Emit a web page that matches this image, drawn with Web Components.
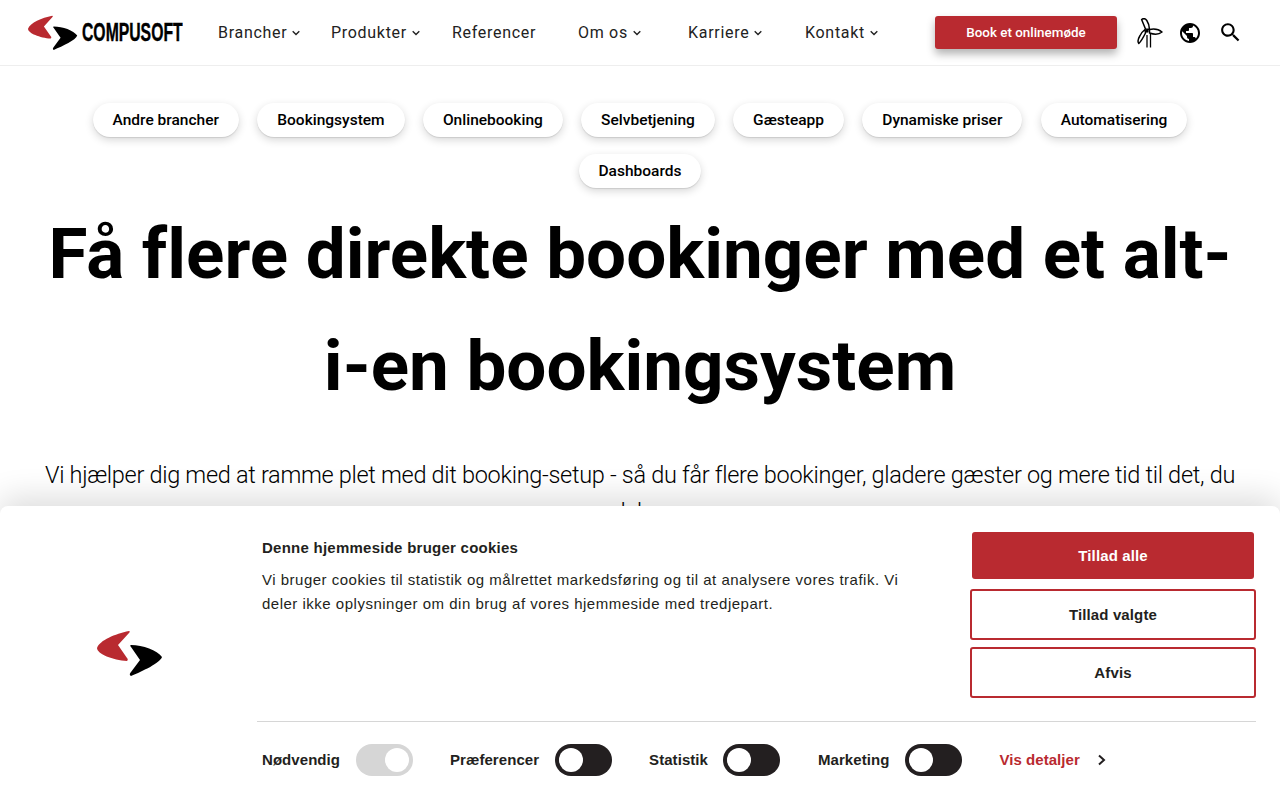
<!DOCTYPE html>
<html lang="da"><head><meta charset="utf-8"><title>Compusoft</title>
<style>
html,body{margin:0;height:800px;overflow:hidden;background:#fff}
body{font-family:Roboto,sans-serif;color:#000;position:relative}
</style></head><body>
<cs-header></cs-header>
<cs-hero></cs-hero>
<cs-cookie></cs-cookie>
<script>
const MARK=(w,h)=>`<svg style="flex:none;display:block" width="${w}" height="${h}" viewBox="0 0 66 46" aria-hidden="true"><path d="M32 1C18 4 3 10 0 18C0 24 16 30 30 31C31 30 31 29 30 28L21 15L32 3C33 2 33 1 32 1Z" fill="#b92a30"/><path d="M34 15C46 15 60 20 65 27C63 33 46 41 34 46C32 45 33 43 34 42L43 30L34 17C33 16 33 15 34 15Z" fill="#000"/></svg>`;
const CHEV=`<svg width="8" height="6" viewBox="0 0 8 6"><path d="M.7 1.200L4 4.500L7.300 1.200" fill="none" stroke="#222" stroke-width="1.400"/></svg>`;
class CsHeader extends HTMLElement{constructor(){super();this.attachShadow({mode:'open'}).innerHTML=`<style>
:host{display:flex;align-items:center;height:65px;border-bottom:1px solid #eee;padding:0 28px;box-sizing:content-box;font-family:Roboto,sans-serif}
.logo{display:flex;align-items:center;width:155px;flex:none}
.logo span{flex:none;width:101px;margin-left:4px;font:bold 25px "Liberation Sans",sans-serif;white-space:nowrap;display:inline-block;transform:scaleX(.63);transform-origin:left;-webkit-text-stroke:.4px #000}
nav{display:flex;margin-left:35px;flex:none}
a{display:flex;align-items:center;font-size:16px;letter-spacing:.7px;color:#222;white-space:nowrap}
a svg{margin-left:5px}
.btn{flex:none;width:182px;height:33px;background:#b92a30;color:#fff;border-radius:3px;display:flex;align-items:center;justify-content:center;font-size:13.400px;font-weight:500;box-shadow:0 5px 9px rgba(0,0,0,.3)}
.i{flex:none;display:block}
</style>
<div class="logo">${MARK(50,35)}<span>COMPUSOFT</span></div>
<nav>
<a style="width:113px">Brancher${CHEV}</a>
<a style="width:121px">Produkter${CHEV}</a>
<a style="width:126px">Referencer</a>
<a style="width:110px">Om os${CHEV}</a>
<a style="width:117px">Karriere${CHEV}</a>
<a style="width:130px">Kontakt${CHEV}</a>
</nav>
<div class="btn">Book et onlinemøde</div>
<svg class="i" style="margin-left:20px;margin-top:0" width="26" height="30" viewBox="0 0 26 30"><path d="M10 17V29.500M13.500 16V29.500" fill="none" stroke="#000" stroke-width="1.300"/><g fill="#fff" stroke="#000" stroke-width="1.500" stroke-linejoin="round"><path d="M8.500 11L4.600 1.500C6.500 .2 8.500 .6 9.800 2.500C11.800 5.500 12.500 8.500 12.500 11.500Z"/><path d="M12.500 11.500C17 10.500 22 11.500 25 14C22 16.500 17 16.500 12.500 15Z"/><path d="M8.500 15C6.500 19 4 23.500 1.800 25.500C.6 24 1 21 2.800 18C4 15.500 6 13 8 11.500Z"/></g><circle cx="10" cy="13" r="1.700" fill="#000"/></svg>
<svg class="i" style="margin-left:15px;margin-top:1px" width="24" height="24" viewBox="0 0 24 24"><path d="M12 2C6.480 2 2 6.480 2 12s4.480 10 10 10 10-4.480 10-10S17.520 2 12 2zm-1 17.930c-3.950-.490-7-3.850-7-7.930 0-.620.080-1.210.210-1.790L9 15v1c0 1.100.9 2 2 2v1.930zm6.900-2.540c-.260-.810-1-1.390-1.900-1.390h-1v-3c0-.550-.450-1-1-1H8v-2h2c.550 0 1-.450 1-1V7h2c1.100 0 2-.9 2-2v-.410c2.930 1.190 5 4.060 5 7.410 0 2.080-.8 3.970-2.100 5.390z"/></svg>
<svg class="i" style="margin-left:16px" width="25" height="25" viewBox="0 0 24 24"><path d="M15.500 14h-.790l-.280-.270C15.410 12.590 16 11.110 16 9.500 16 5.910 13.090 3 9.500 3S3 5.910 3 9.500 5.910 16 9.500 16c1.610 0 3.090-.590 4.230-1.570l.270.280v.790l5 4.990L20.490 19l-4.990-5zm-6 0C7.010 14 5 11.990 5 9.500S7.010 5 9.500 5 14 7.010 14 9.500 11.990 14 9.500 14z"/></svg>`}}
class CsChip extends HTMLElement{constructor(){super();this.attachShadow({mode:'open'}).innerHTML=`<style>
:host{display:inline-flex;align-items:center;height:34px;padding:0 20px;border-radius:17px;background:#fff;font:500 15.500px Roboto,sans-serif;color:#000;box-shadow:0 1px 1px rgba(0,0,0,.1),0 3px 8px rgba(0,0,0,.16);white-space:nowrap}
</style><slot></slot>`}}
class CsHero extends HTMLElement{constructor(){super();this.attachShadow({mode:'open'}).innerHTML=`<style>
:host{display:block;text-align:center;padding:37px 32px 0;font-family:Roboto,sans-serif}
.chips{display:flex;flex-wrap:wrap;justify-content:center;gap:17px 18.300px}
h1{margin:10px 0 0;font:700 71px/112px Roboto,sans-serif;font-variant-ligatures:none;color:#000}
p{margin:35px -10px 0;font:300 23.500px/37px Roboto,sans-serif;letter-spacing:-.3px;color:#000}
</style>
<div class="chips"><cs-chip>Andre brancher</cs-chip><cs-chip>Bookingsystem</cs-chip><cs-chip>Onlinebooking</cs-chip><cs-chip>Selvbetjening</cs-chip><cs-chip>Gæsteapp</cs-chip><cs-chip>Dynamiske priser</cs-chip><cs-chip>Automatisering</cs-chip><cs-chip>Dashboards</cs-chip></div>
<h1>Få flere direkte bookinger med et alt-<br>i-en bookingsystem</h1>
<p>Vi hjælper dig med at ramme plet med dit booking-setup - så du får flere bookinger, gladere gæster og mere tid til det, du<br>elsker.</p>`}}
class CsToggle extends HTMLElement{constructor(){super();const on=this.hasAttribute('on');this.attachShadow({mode:'open'}).innerHTML=`<style>
:host{display:flex;flex:none;align-items:center;width:57px;height:32px;border-radius:16px;background:${on?'#d6d6d6':'#231f20'};padding:4px;box-sizing:border-box;justify-content:${on?'flex-end':'flex-start'}}
i{display:block;width:24px;height:24px;border-radius:50%;background:#fff}
</style><i></i>`}}
class CsCookie extends HTMLElement{constructor(){super();this.attachShadow({mode:'open'}).innerHTML=`<style>
:host{position:absolute;left:0;right:0;top:506px;height:294px;background:#fff;border-radius:8px 8px 0 0;box-shadow:0 -8px 32px rgba(0,0,0,.14);font-family:"Liberation Sans",Arial,sans-serif;color:#231f20;display:grid;grid-template-columns:256px 1fr;box-sizing:border-box}
.logo{display:flex;align-items:center;justify-content:center;padding:0 0 0 3px}
.main{padding:0 24px 0 1px;display:flex;flex-direction:column}
.top{display:flex;height:215px;border-bottom:1px solid #d6d6d6}
.txt{flex:1;padding:33px 0 0 5px}
h2{margin:0 0 11px;font-size:15px;line-height:18px;font-weight:700;letter-spacing:.25px}
.txt p{margin:0;width:645px;font-size:15px;line-height:24px;letter-spacing:.5px}
.btns{width:286px;padding-top:26px;display:flex;flex-direction:column;align-items:center}
.b{box-sizing:border-box;display:flex;align-items:center;justify-content:center;font-weight:700;font-size:15px;letter-spacing:.12px;border-radius:3px}
.p{width:282px;height:47px;background:#b92a30;color:#fff;margin-bottom:10px}
.s{width:286px;height:51px;border:2px solid #b92a30;margin-bottom:7px}
.row{display:flex;align-items:center;height:77px;padding:0 0 2px 5px;box-sizing:border-box;font-weight:700;font-size:15px;letter-spacing:.06px}
.row span{white-space:nowrap}
.row a{color:#b92a30;white-space:nowrap}
</style>
<div class="logo">${MARK(66,46)}</div>
<div class="main">
<div class="top"><div class="txt"><h2>Denne hjemmeside bruger cookies</h2><p>Vi bruger cookies til statistik og målrettet markedsføring og til at analysere vores trafik. Vi deler ikke oplysninger om din brug af vores hjemmeside med tredjepart.</p></div>
<div class="btns"><div class="b p">Tillad alle</div><div class="b s">Tillad valgte</div><div class="b s">Afvis</div></div></div>
<div class="row"><span>Nødvendig</span><cs-toggle on style="margin:0 37px 0 16px"></cs-toggle><span>Præferencer</span><cs-toggle style="margin:0 37px 0 16px"></cs-toggle><span>Statistik</span><cs-toggle style="margin:0 38px 0 15px"></cs-toggle><span>Marketing</span><cs-toggle style="margin:0 37px 0 16px"></cs-toggle><a>Vis detaljer</a><svg style="margin-left:17px" width="10" height="12" viewBox="0 0 10 12"><path d="M2 1.500L7 6L2 10.500" fill="none" stroke="#231f20" stroke-width="2"/></svg></div>
</div>`}}
customElements.define('cs-header',CsHeader);customElements.define('cs-chip',CsChip);customElements.define('cs-hero',CsHero);customElements.define('cs-toggle',CsToggle);customElements.define('cs-cookie',CsCookie);
</script></body></html>
